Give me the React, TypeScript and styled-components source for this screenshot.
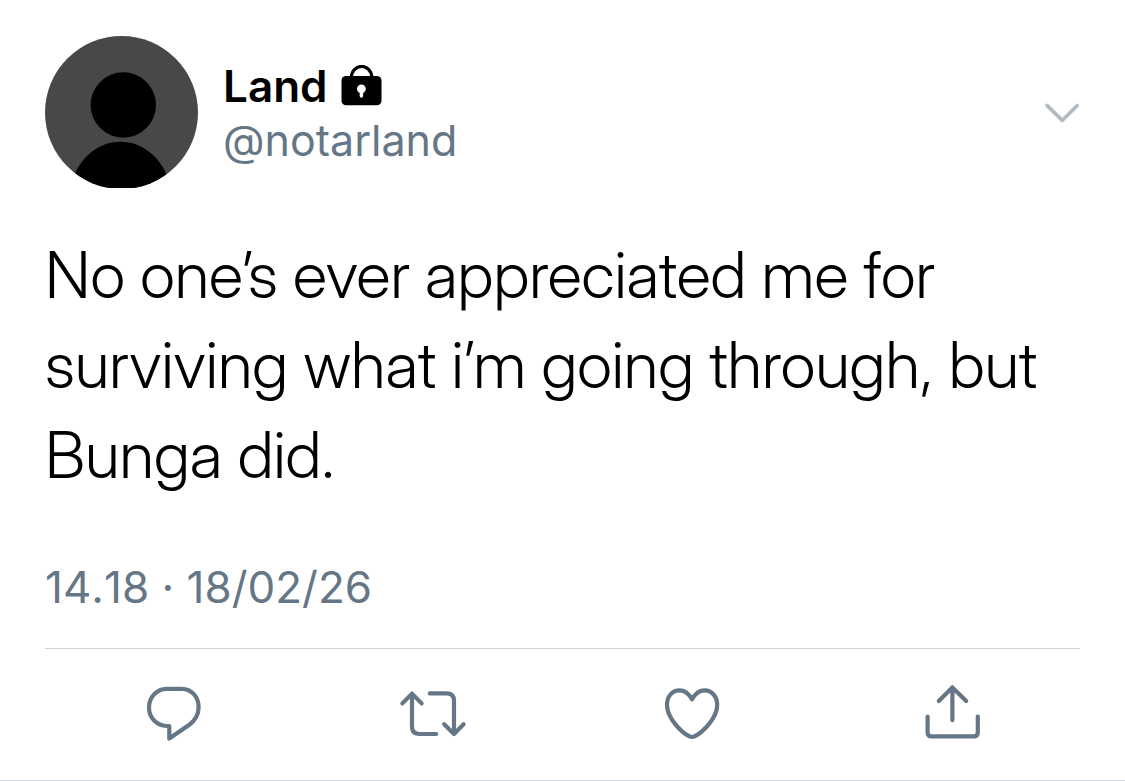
import React from "react";
import styled, { createGlobalStyle } from "styled-components";

const GlobalStyle = createGlobalStyle`
  *, *::before, *::after { box-sizing: border-box; }
  body {
    margin: 0;
    background: #ffffff;
    color: #000000;
    font-family: Inter, "Liberation Sans", sans-serif;
  }
`;

const Tweet = styled.article`
  padding-top: 36px;
  border-bottom: 1px solid #ccd6dd;
`;

const Content = styled.div`
  padding: 0 45px;
`;

const Header = styled.header`
  display: flex;
  align-items: center;
  gap: 25px;
`;

const Avatar = styled.svg`
  flex: none;
  width: 153px;
  height: 153px;
`;

const Author = styled.div`
  flex: 1;
  line-height: 54px;
`;

const Name = styled.div`
  display: flex;
  align-items: center;
  gap: 13px;
  font-size: 44px;
  font-weight: 600;
`;

const LockIcon = styled.svg`
  width: 42px;
  height: 42px;
`;

const Handle = styled.a`
  display: block;
  color: #657786;
  font-size: 43px;
  text-decoration: none;
`;

const IconButton = styled.button<{ $tone: string }>`
  display: flex;
  padding: 0;
  border: 0;
  background: none;
  color: ${(p) => p.$tone};
  cursor: pointer;
`;

const LineIcon = styled.svg<{ $width: number; $height: number; $stroke: number }>`
  width: ${(p) => p.$width}px;
  height: ${(p) => p.$height}px;
  fill: none;
  stroke: currentColor;
  stroke-width: ${(p) => p.$stroke};
  stroke-linecap: round;
  stroke-linejoin: round;
  overflow: visible;
`;

const Message = styled.p`
  margin: 41px 0 0;
  font-family: "Inter Display", Inter, "Liberation Sans", sans-serif;
  font-size: 64px;
  font-weight: 300;
  line-height: 90px;
`;

const Timestamp = styled.time`
  display: block;
  margin-top: 57px;
  padding-bottom: 31px;
  border-bottom: 1px solid #d0d3d6;
  color: #657786;
  font-size: 44px;
  font-kerning: none;
  line-height: 60px;
`;

const Actions = styled.div`
  display: grid;
  grid-template-columns: repeat(4, 1fr);
  justify-items: center;
  padding: 33px 0 34px;
`;

const actions = [
  {
    label: "Reply",
    path: "M24.5 6.8H40C49.5 6.8 56.6 15 56.6 25.2C56.6 33 53 38.5 47 43L27.3 56.6V44H26C15 44 7 36 7 25.4C7 15 15 6.8 24.5 6.8Z",
  },
  {
    label: "Retweet",
    path: "M1.4 21.4L11 11.6L20.6 21.4M11 12V44.5Q11 52 18.5 52H35.2M28.8 11.4H45.5Q53 11.4 53 18.9V51.6M43.2 42.3L53 52L62.6 42.3",
  },
  {
    label: "Like",
    path: "M32 17.3C29 12 25 8.4 19.5 8.4C12 8.4 7 14.5 7 23C7 36 21 50 29 54.2Q32 55.8 35 54.2C43 50 57.2 36 57.2 23C57.2 14.5 52 8.4 44.5 8.4C39 8.4 35 12 32 17.3Z",
  },
  {
    label: "Share",
    path: "M33.4 5.4V38.2M19.8 19L33.4 5.4L47.2 19M8.6 34.6V50.4Q8.6 54.3 12.5 54.3H54.9Q58.8 54.3 58.8 50.4V34.6",
  },
];

export default function App() {
  return (
    <>
      <GlobalStyle />
      <Tweet>
        <Content>
          <Header>
            <Avatar viewBox="0 0 153 153" role="img" aria-label="Land">
              <clipPath id="avatar-clip">
                <circle cx="76.5" cy="76.5" r="76.5" />
              </clipPath>
              <g clipPath="url(#avatar-clip)">
                <rect width="153" height="152" fill="#484848" />
                <circle cx="78.3" cy="69" r="32.7" fill="#000000" />
                <path d="M25 152C31 124 52 105.7 75.5 105.7S120 124 126 152Z" fill="#000000" />
              </g>
            </Avatar>
            <Author>
              <Name>
                Land
                <LockIcon viewBox="0 0 42 42" role="img" aria-label="Protected account">
                  <path
                    d="M10.4 13V12.2A10.2 10.8 0 0 1 30.8 12.2V13"
                    fill="none"
                    stroke="#000000"
                    strokeWidth="3.2"
                  />
                  <rect x="0.5" y="11" width="40" height="29.3" rx="4.6" fill="#000000" />
                  <circle cx="20.4" cy="23.8" r="4.4" fill="#ffffff" />
                  <path d="M20.4 24V31" stroke="#ffffff" strokeWidth="3.4" strokeLinecap="round" />
                </LockIcon>
              </Name>
              <Handle href="#profile">@notarland</Handle>
            </Author>
            <IconButton type="button" aria-label="More options" $tone="#b0bac3">
              <LineIcon viewBox="0 0 36 20" $width={36} $height={20} $stroke={3.6}>
                <path d="M3 2.4L18.2 17.4L33.2 2.4" />
              </LineIcon>
            </IconButton>
          </Header>
          <Message>
            No one’s ever appreciated me for surviving what i’m going through, but Bunga did.
          </Message>
          <Timestamp dateTime="2026-02-18T14:18">14.18 · 18/02/26</Timestamp>
          <Actions>
            {actions.map((action) => (
              <IconButton key={action.label} type="button" aria-label={action.label} $tone="#657786">
                <LineIcon viewBox="0 0 64 64" $width={64} $height={64} $stroke={4.2}>
                  <path d={action.path} />
                </LineIcon>
              </IconButton>
            ))}
          </Actions>
        </Content>
      </Tweet>
    </>
  );
}
